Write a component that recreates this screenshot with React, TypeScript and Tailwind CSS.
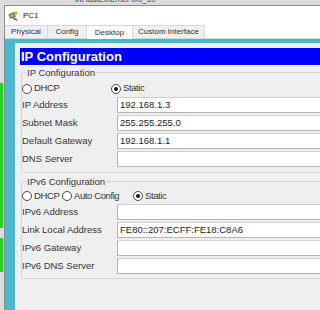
import React from 'react'

interface RadioProps {
    label: string;
    checked?: boolean;
    width?: string;
}

const Radio: React.FC<RadioProps> = ({ label, checked, width }) => (
    <div className={`flex items-center gap-[2px] ${width ?? ''}`}>
        <span className="w-[10px] h-[10px] shrink-0 rounded-full border border-[#4a4a4a] bg-white flex items-center justify-center">
            {checked && <span className="w-[4px] h-[4px] rounded-full bg-[#111]"></span>}
        </span>
        <span className="tracking-[-0.4px]">{label}</span>
    </div>
)

const Field: React.FC<{ label: string; value?: string }> = ({ label, value }) => (
    <div className="flex items-center h-[16px]">
        <div className="w-[95px] shrink-0">{label}</div>
        <div className="w-[230px] h-[16px] bg-white border border-[#b4b4b4] border-t-[#cfcfcf] pl-[2px] leading-[14px] text-[#222]">
            {value}
        </div>
    </div>
)

const tabs = [
    { name: 'Physical', w: 'w-[43px]' },
    { name: 'Config', w: 'w-[39px]' },
    { name: 'Desktop', w: 'w-[46px]', active: true },
    { name: 'Custom Interface', w: 'w-[72px]' },
]

const App: React.FC = () => {
    return (
        <div className="w-[320px] h-[310px] overflow-hidden bg-[#dcdcdc] font-['Liberation_Sans',Arial,sans-serif] text-[9.5px] text-[#363636]">
            {/* strip above the window, text clipped */}
            <div className="h-[5px] overflow-hidden">
                <div className="pl-[75px] -mt-[4px] text-[8px] leading-[8px] text-[#444]">int fastEthernet 0/0_10</div>
            </div>

            <div className="flex h-[305px]">
                <div className="w-[4px] shrink-0 flex flex-col">
                    <div className="h-[78px]"></div>
                    <div className="h-[145px] w-[3px] bg-[#22d61e]"></div>
                    <div className="h-[10px]"></div>
                    <div className="h-[34px] w-[3px] bg-[#22d61e]"></div>
                </div>

                {/* PC1 window */}
                <div className="w-[340px] shrink-0 flex flex-col border-l border-t border-[#8c8c8c] bg-white">
                    <div className="h-[19px] flex items-center pl-[3px] gap-[4px]">
                        <svg width="11" height="11" viewBox="0 0 11 11">
                            <rect x="1" y="3" width="6" height="5" transform="rotate(-20 4 5)" fill="#5a6b4a" />
                            <rect x="2" y="4" width="4" height="3" transform="rotate(-20 4 5)" fill="#7fd45a" />
                            <circle cx="8" cy="3" r="1.6" fill="#e0a020" />
                            <path d="M5 8 L9 10" stroke="#c0392b" strokeWidth="1.4" />
                        </svg>
                        <span className="text-[8px] text-[#222]">PC1</span>
                    </div>

                    <div className="h-[14px] flex items-end border-b border-[#d4d4d4] text-[8px] text-[#333]">
                        {tabs.map(t => (
                            <div
                                key={t.name}
                                className={`${t.w} flex items-center justify-center border-r border-t border-[#d9d9d9] ${t.active ? 'h-[14px] bg-white -mb-[1px]' : 'h-[13px] bg-[#f0f0f0]'}`}
                            >
                                {t.name}
                            </div>
                        ))}
                    </div>

                    <div className="flex-1 border-t-[4px] border-l-[10px] border-[#4cb7d0] bg-[#efefef] pt-[5px] pl-[5px]">
                        <div className="h-[17px] bg-[#0000ff] text-white font-bold text-[13px] leading-[17px] pl-[1px]">
                            IP Configuration
                        </div>

                        <fieldset className="mt-[2px] ml-[1px] border border-[#d2d2d2] rounded-[2px] pb-[5px]">
                            <legend className="ml-[4px] px-[1px] leading-[11px]">IP Configuration</legend>
                            <div className="flex items-center h-[17px] mt-[2px]">
                                <Radio label="DHCP" width="w-[89px]" />
                                <Radio label="Static" checked />
                            </div>
                            <div className="flex flex-col gap-[2px]">
                                <Field label="IP Address" value="192.168.1.3" />
                                <Field label="Subnet Mask" value="255.255.255.0" />
                                <Field label="Default Gateway" value="192.168.1.1" />
                                <Field label="DNS Server" />
                            </div>
                        </fieldset>

                        <fieldset className="mt-[3px] ml-[1px] border border-[#d2d2d2] rounded-[2px] pb-[4px]">
                            <legend className="ml-[4px] px-[1px] leading-[11px]">IPv6 Configuration</legend>
                            <div className="flex items-center h-[16px] mt-[1px]">
                                <Radio label="DHCP" width="w-[40px]" />
                                <Radio label="Auto Config" width="w-[71px]" />
                                <Radio label="Static" checked />
                            </div>
                            <div className="flex flex-col gap-[2px]">
                                <Field label="IPv6 Address" />
                                <Field label="Link Local Address" value="FE80::207:ECFF:FE18:C8A6" />
                                <Field label="IPv6 Gateway" />
                                <Field label="IPv6 DNS Server" />
                            </div>
                        </fieldset>
                    </div>
                </div>
            </div>
        </div>
    )
}

export default App
